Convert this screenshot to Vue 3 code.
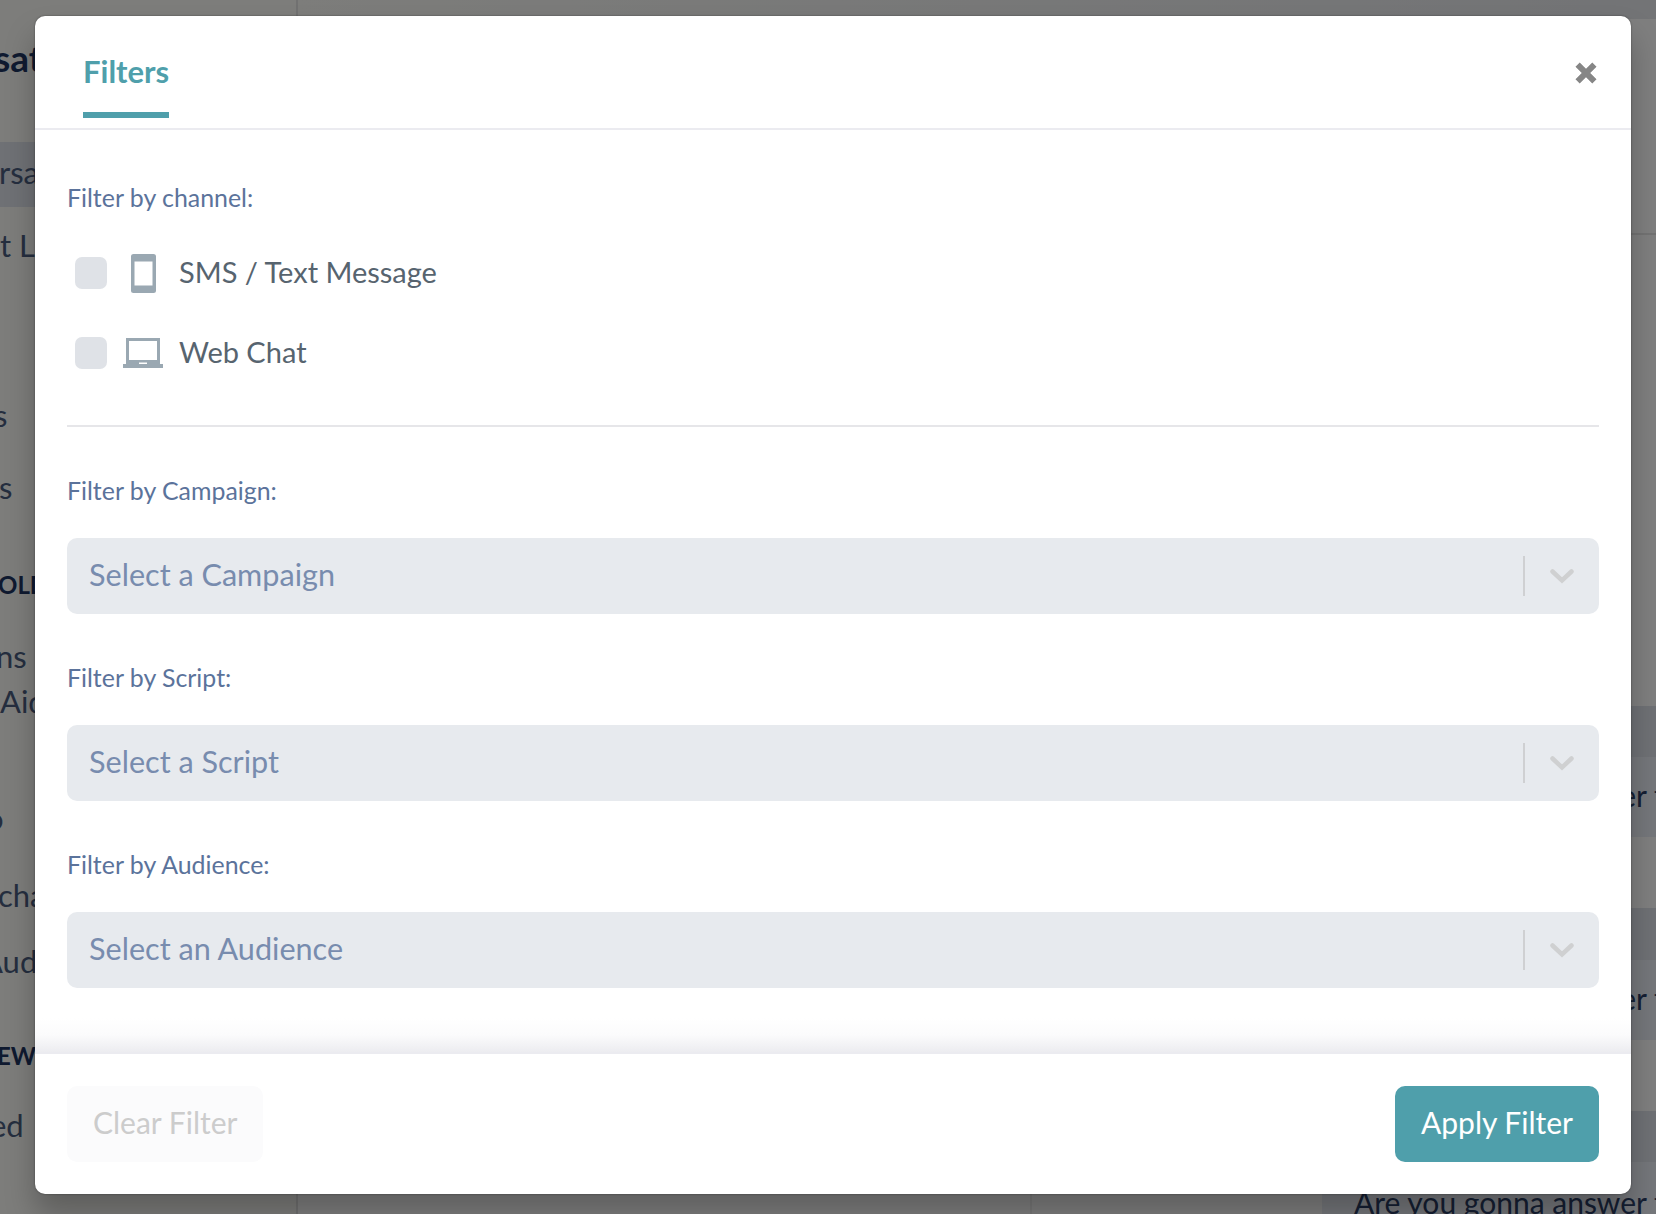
<script setup>
const channels = [
  { label: 'SMS / Text Message', icon: 'phone' },
  { label: 'Web Chat', icon: 'laptop' },
]
const selects = [
  { label: 'Filter by Campaign:', placeholder: 'Select a Campaign' },
  { label: 'Filter by Script:', placeholder: 'Select a Script' },
  { label: 'Filter by Audience:', placeholder: 'Select an Audience' },
]
const sideRows = [
  { t: 'sations', h: 60, mt: 32, x: -6, lift: 8, cls: 'title' },
  { t: 'rsations', h: 65, mt: 50, x: -1, lift: 4, cls: 'active' },
  { t: 't List', h: 60, mt: 11, x: 0, lift: 5, cls: '' },
  { t: 's', h: 60, mt: 109, x: -6, lift: 4, cls: '' },
  { t: 's', h: 60, mt: 12, x: -1, lift: 4, cls: '' },
  { t: 'OLD', h: 40, mt: 46, x: -2, lift: 0, cls: 'caps' },
  { t: 'ns r', h: 40, mt: 33, x: -4, lift: 4, cls: '' },
  { t: 'Aid', h: 40, mt: 4, x: 0, lift: 2, cls: '' },
  { t: 'o', h: 40, mt: 78, x: -14, lift: 4, cls: '' },
  { t: 'cha', h: 40, mt: 37, x: -2, lift: 4, cls: '' },
  { t: 'Aud', h: 40, mt: 25, x: -18, lift: 2, cls: '' },
  { t: 'EW', h: 40, mt: 54, x: -3, lift: 0, cls: 'caps' },
  { t: 'ed', h: 40, mt: 31, x: -10, lift: 4, cls: '' },
]
const listRows = [
  { h: 471, cls: 'plain', t: '' },
  { h: 51, cls: 'dark', t: '' },
  { h: 80, cls: 'mid', t: 'Are you gonna answer the' },
  { h: 71, cls: 'plain', t: '' },
  { h: 52, cls: 'dark', t: '' },
  { h: 80, cls: 'mid', t: 'Are you gonna answer the' },
  { h: 71, cls: 'plain', t: '' },
  { h: 51, cls: 'dark', t: '' },
  { h: 52, cls: 'mid low', t: 'Are you gonna answer the' },
]
</script>

<template>
  <div class="page">
    <aside class="side">
      <div
        v-for="(r, i) in sideRows"
        :key="i"
        class="side-row"
        :class="r.cls"
        :style="{ height: r.h + 'px', lineHeight: (r.h - r.lift) + 'px', marginTop: r.mt + 'px', textIndent: r.x + 'px' }"
      >{{ r.t }}</div>
    </aside>
    <main class="main">
      <div class="topbar"></div>
      <div class="columns">
        <div class="col-a"></div>
        <div class="col-b"></div>
        <div class="col-c">
          <div class="list-head"></div>
          <div v-for="(r, i) in listRows" :key="i" class="list-row" :class="r.cls" :style="{ height: r.h + 'px' }">{{ r.t }}</div>
        </div>
      </div>
    </main>

    <div class="overlay">
      <div class="modal">
        <header class="head">
          <div class="tab">Filters</div>
          <svg class="close" viewBox="0 0 22 22" width="22" height="22">
            <path d="M2.6 2.6 L19.4 19.4 M19.4 2.6 L2.6 19.4" stroke="#868686" stroke-width="6" fill="none" />
          </svg>
        </header>
        <div class="body">
          <div class="label first">Filter by channel:</div>
          <div v-for="c in channels" :key="c.label" class="channel">
            <span class="check"></span>
            <span class="icon">
              <svg v-if="c.icon === 'phone'" viewBox="0 0 25 39" width="25" height="39">
                <path fill-rule="evenodd" fill="#9aa8b2" d="M2.5 0h20a2.5 2.5 0 0 1 2.5 2.5v34a2.5 2.5 0 0 1-2.5 2.5h-20a2.5 2.5 0 0 1-2.5-2.5v-34a2.5 2.5 0 0 1 2.5-2.5ZM3.5 7.5v24h18v-24Z" />
              </svg>
              <svg v-else viewBox="0 0 40 30" width="40" height="30">
                <path fill-rule="evenodd" fill="#9aa8b2" d="M3 0h34v26h3v4H0v-4h3ZM6 3v19h28V3ZM16 24.4v1.6h8v-1.6Z" />
              </svg>
            </span>
            <span class="channel-text">{{ c.label }}</span>
          </div>
          <div class="rule"></div>
          <div v-for="s in selects" :key="s.label" class="field">
            <div class="label">{{ s.label }}</div>
            <div class="select">
              <span class="placeholder">{{ s.placeholder }}</span>
              <span class="sep"></span>
              <svg class="chev" viewBox="0 0 24 15" width="24" height="15">
                <path d="M2.5 2.5 L12 11.5 L21.5 2.5" stroke="#cfd0d1" stroke-width="4.5" fill="none" stroke-linecap="round" />
              </svg>
            </div>
          </div>
          <div class="fade"></div>
        </div>
        <footer class="foot">
          <button class="btn clear">Clear Filter</button>
          <button class="btn apply">Apply Filter</button>
        </footer>
      </div>
    </div>
  </div>
</template>

<style>
html, body { margin: 0; background: #fff; }
</style>

<style scoped>
.page {
  position: relative;
  width: 1656px;
  height: 1214px;
  display: flex;
  background: #fff;
  font-family: Lato, "Noto Sans", sans-serif;
  overflow: hidden;
}
.side {
  width: 298px;
  flex: none;
  border-right: 2px solid #e2e2e2;
  box-sizing: border-box;
  overflow: hidden;
  background: #fafaf6;
}
.side-row {
  color: #4a5d7e;
  font-size: 31px;
  white-space: nowrap;
}
.side-row.title { font-size: 37px; font-weight: 700; color: #1f3560; }
.side-row.active { background: #dfe2ea; }
.side-row.caps { font-size: 24px; font-weight: 700; color: #1f3560; }
.main { flex: 1; display: flex; flex-direction: column; min-width: 0; }
.topbar {
  height: 19px;
  flex: none;
  background: linear-gradient(90deg, #fafaf6, #e6e8ec);
}
.columns { flex: 1; display: flex; min-height: 0; }
.col-a { width: 732px; flex: none; background: #fff; }
.col-b { width: 292px; flex: none; background: #fff; border-left: 2px solid #f0f0f0; box-sizing: border-box; }
.col-c { flex: 1; min-width: 0; overflow: hidden; }
.list-head { height: 216px; border-bottom: 2px solid #e6e6e6; box-sizing: border-box; }
.list-row {
  padding-left: 32px;
  color: #2a3e66;
  font-size: 30px;
  white-space: nowrap;
  display: flex;
  align-items: center;
  box-sizing: border-box;
}
.list-row.plain { background: #fff; }
.list-row.dark { background: #dfe2ea; }
.list-row.mid { background: #ebeef6; padding-bottom: 4px; }
.list-row.low { align-items: flex-start; padding-top: 22px; padding-bottom: 0; }

.overlay {
  position: absolute;
  inset: 0;
  background: rgba(0, 0, 0, .5);
  padding: 16px 25px 20px 35px;
  box-sizing: border-box;
}
.modal {
  width: 1596px;
  height: 1178px;
  background: #fff;
  border-radius: 10px;
  display: flex;
  flex-direction: column;
  box-shadow: 0 0 2px rgba(0, 0, 0, .45), 0 20px 30px rgba(0, 0, 0, .25);
  overflow: hidden;
}
.head {
  height: 114px;
  box-sizing: border-box;
  border-bottom: 2px solid #ebebf0;
  display: flex;
  justify-content: space-between;
  padding: 0 34px 0 48px;
  flex: none;
}
.tab {
  color: #4f9fab;
  font-size: 31px;
  font-weight: 700;
  height: 102px;
  line-height: 110px;
  border-bottom: 6px solid #4f9fab;
  box-sizing: border-box;
}
.close { margin-top: 46px; }
.body { flex: 1; padding: 0 32px; position: relative; min-height: 0; }
.label { color: #5b739b; font-size: 24.9px; line-height: 30px; padding-bottom: 2px; }
.label.first { margin-top: 52px; margin-bottom: 19px; }
.channel { display: flex; align-items: center; height: 80px; padding-left: 8px; }
.check { width: 32px; height: 32px; background: #dfe2e7; border-radius: 7px; flex: none; }
.icon { width: 56px; margin: 0 8px 0 8px; display: flex; justify-content: center; }
.channel-text { color: #57646f; font-size: 29px; padding-bottom: 4px; }
.rule { height: 2px; background: #e6e6e9; margin-top: 32px; margin-bottom: 48px; }
.field { margin-bottom: 48px; }
.select {
  margin-top: 31px;
  height: 76px;
  background: #e7eaee;
  border-radius: 10px;
  display: flex;
  align-items: center;
  padding: 0 25px 0 22px;
}
.placeholder { color: #788cae; font-size: 30.6px; flex: 1; padding-bottom: 4px; }
.sep { width: 2px; height: 40px; background: #cfd0d2; margin-right: 25px; }
.fade {
  position: absolute;
  left: 0;
  right: 0;
  bottom: 0;
  height: 34px;
  background: linear-gradient(180deg, rgba(235, 235, 240, 0) 0%, rgba(235, 235, 240, .2) 50%, #ececf0 100%);
}
.foot {
  height: 142px;
  flex: none;
  border-top: 2px solid #ebebf0;
  display: flex;
  justify-content: space-between;
  padding: 32px 32px 0;
  box-sizing: border-box;
}
.btn {
  height: 76px;
  border: 0;
  border-radius: 10px;
  font-family: inherit;
  font-size: 30px;
  padding: 0 26px 4px;
}
.clear { background: #fbfbfc; color: #ccc; }
.apply { background: #4f9fab; color: #fff; }
</style>
